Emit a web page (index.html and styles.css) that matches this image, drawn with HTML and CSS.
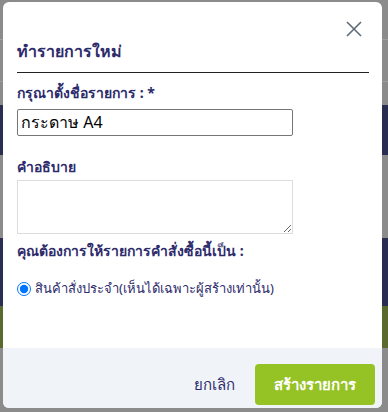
FILE: index.html
```html
<!DOCTYPE html>
<html lang="th">
<head>
    <meta charset="UTF-8">
    <meta name="viewport" content="width=device-width, initial-scale=1.0">
    <title>ทำรายการใหม่</title>
    <link rel="stylesheet" href="styles.css">
</head>
<body>
    <div class="backdrop">
        <div class="bg-line bg-line-1"></div>
        <div class="bg-line bg-line-2"></div>
        <div class="bg-band bg-band-1"></div>
        <div class="bg-band bg-band-2"></div>
        <div class="bg-band bg-band-3"></div>
    </div>

    <div class="modal">
        <div class="modal-body">
            <div class="modal-top">
                <button class="close-btn" type="button" aria-label="close">
                    <svg width="16" height="16" viewBox="0 0 16 16">
                        <path d="M1 1 L15 15 M15 1 L1 15" stroke="#5f6b78" stroke-width="1.6" fill="none"/>
                    </svg>
                </button>
            </div>
            <h2 class="modal-title">ทำรายการใหม่</h2>

            <form id="newItemForm">
                <div class="form-group">
                    <label for="itemName">กรุณาตั้งชื่อรายการ : *</label>
                    <input type="text" id="itemName" value="กระดาษ A4">
                </div>

                <div class="form-group desc-group">
                    <label for="itemDesc">คำอธิบาย</label>
                    <textarea id="itemDesc"></textarea>
                </div>

                <div class="form-group type-group">
                    <label>คุณต้องการให้รายการคำสั่งซื้อนี้เป็น :</label>
                    <div class="radio-row">
                        <input type="radio" id="typeRegular" name="itemType" checked>
                        <span>สินค้าสั่งประจำ(เห็นได้เฉพาะผู้สร้างเท่านั้น)</span>
                    </div>
                </div>
            </form>
        </div>

        <div class="modal-footer">
            <button class="btn-cancel" type="button">ยกเลิก</button>
            <button class="btn-create" type="button">สร้างรายการ</button>
        </div>
    </div>
</body>
</html>
```

FILE: styles.css
```css
* {
    box-sizing: border-box;
}

body {
    margin: 0;
    width: 388px;
    height: 412px;
    overflow: hidden;
    background: #8b8b8b;
    font-family: Tahoma, "Noto Sans", "DejaVu Sans", sans-serif;
    color: #2d2b6b;
}

.backdrop {
    position: absolute;
    inset: 0;
}

.bg-line {
    position: absolute;
    left: 0;
    right: 0;
    height: 1px;
    background: #9e9e9e;
}

.bg-line-1 { top: 39px; }
.bg-line-2 { top: 81px; }

.bg-band {
    position: absolute;
    left: 0;
    right: 0;
}

.bg-band-1 {
    top: 105px;
    height: 50px;
    background: #2a2d52;
}

.bg-band-2 {
    top: 238px;
    height: 68px;
    background: #2a2d52;
}

.bg-band-3 {
    top: 306px;
    height: 42px;
    background: #5a6a2e;
}

.modal {
    position: relative;
    margin: 2px 6px 0 3px;
    width: 379px;
    height: 406px;
    background: #fff;
    border-radius: 6px;
    overflow: hidden;
    display: flex;
    flex-direction: column;
}

.modal-body {
    flex: 1;
    padding: 0 13px 0 14px;
}

.modal-top {
    display: flex;
    justify-content: flex-end;
    padding-top: 19px;
    padding-right: 7px;
}

.close-btn {
    border: none;
    background: none;
    padding: 0;
    width: 16px;
    height: 16px;
    cursor: pointer;
}

.modal-title {
    margin: 3px 0 0;
    padding-bottom: 10px;
    font-size: 16px;
    font-weight: bold;
    line-height: 22px;
    border-bottom: 1.5px solid #222;
}

.form-group {
    margin-top: 11px;
}

.form-group label {
    display: block;
    font-size: 14px;
    font-weight: bold;
    line-height: 18px;
    margin-bottom: 7px;
}

.form-group input[type="text"] {
    width: 276px;
    height: 27px;
    border: 1px solid #767676;
    border-radius: 2px;
    padding: 0 3px;
    font-family: inherit;
    font-size: 16px;
    color: #000;
}

.desc-group {
    margin-top: 22px;
}

.desc-group label {
    margin-bottom: 4px;
}

.form-group textarea {
    display: block;
    width: 276px;
    height: 54px;
    border: 1px solid #ddd;
    border-radius: 0;
    font-family: inherit;
    margin: 0;
}

.type-group {
    margin-top: 8px;
}

.radio-row {
    display: flex;
    align-items: center;
    gap: 4px;
    margin-top: 18px;
    font-size: 13px;
}

.radio-row input {
    margin: 0;
    width: 14px;
    height: 14px;
}

.modal-footer {
    height: 60px;
    background: #f0f3f7;
    display: flex;
    justify-content: flex-end;
    align-items: flex-end;
    gap: 20px;
    padding: 0 7px 3px 0;
}

.btn-cancel {
    border: none;
    background: none;
    font-family: inherit;
    font-size: 15px;
    color: #2d2b6b;
    height: 41px;
    padding: 0;
    cursor: pointer;
}

.btn-create {
    width: 120px;
    height: 41px;
    border: none;
    border-radius: 4px;
    background: #95c225;
    color: #fff;
    font-family: inherit;
    font-size: 15px;
    font-weight: bold;
    cursor: pointer;
}
```
